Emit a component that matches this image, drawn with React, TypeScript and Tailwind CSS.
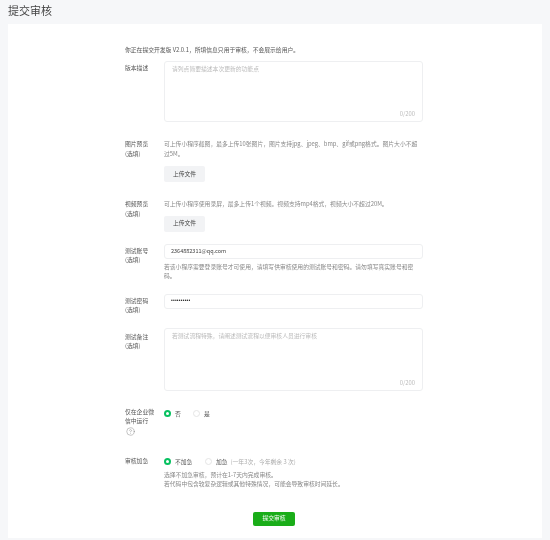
import type { ReactNode } from 'react';
import { CircleHelp } from 'lucide-react';

const font = { fontFamily: '"Noto Sans CJK SC", "Liberation Sans", sans-serif' };

function Row({ label, top, children }: { label: ReactNode; top: string; children: ReactNode }) {
  return (
    <div className={`flex ${top}`}>
      <div className="w-[39px] shrink-0 pr-[6px] text-[5.8px] leading-[9.5px] text-[#555]">{label}</div>
      <div className="min-w-0 flex-1">{children}</div>
    </div>
  );
}

function TextArea({ placeholder, height }: { placeholder: string; height: string }) {
  return (
    <div className={`flex flex-col justify-between rounded-[3px] border border-[#eeeff1] px-[7px] pt-[2px] pb-[3px] ${height}`}>
      <div className="text-[5.8px] leading-[9px] text-[#bbb]">{placeholder}</div>
      <div className="text-right text-[5.8px] leading-[9px] text-[#bbb]">0/200</div>
    </div>
  );
}

function UploadButton({ top }: { top: string }) {
  return (
    <button className={`block h-4 w-[41px] rounded-[2px] bg-[#f2f3f5] text-[5.8px] text-[#444] ${top}`}>
      上传文件
    </button>
  );
}

function Radio({ on, className = '' }: { on?: boolean; className?: string }) {
  return on ? (
    <span className={`flex h-[7px] w-[7px] items-center justify-center rounded-full bg-[#07c160] ${className}`}>
      <span className="h-[3px] w-[3px] rounded-full bg-white" />
    </span>
  ) : (
    <span className={`h-[7px] w-[7px] rounded-full border border-[#e5e5e5] ${className}`} />
  );
}

export default function App() {
  return (
    <div className="h-[540px] overflow-hidden bg-[#f6f7f9] px-2 pt-[3px] blur-[0.3px]" style={font}>
      <h1 className="text-[11px] leading-[14px] font-normal text-[#444]">提交审核</h1>
      <div className="mt-[7px] h-[514px] bg-white pt-[21px] pl-[117px]">
        <div className="w-[298px]">
          <p className="text-[5.8px] leading-[9px] text-[#555]">你正在提交开发版 V2.0.1，所填信息只用于审核，不会展示给用户。</p>

          <Row label={<div className="pt-[2px]">版本描述</div>} top="mt-[7px]">
            <TextArea height="h-[61px]" placeholder="请列点简要描述本次更新的功能点" />
          </Row>

          <Row label={<>图片预览<br />(选填)</>} top="mt-[17px]">
            <p className="text-[5.8px] leading-[9.5px] text-[#888]">
              可上传小程序截图，最多上传10张图片，图片支持jpg、jpeg、bmp、gif或png格式。图片大小不超过5M。
            </p>
            <UploadButton top="mt-2" />
          </Row>

          <Row label={<>视频预览<br />(选填)</>} top="mt-[17px]">
            <p className="text-[5.8px] leading-[9.5px] text-[#888]">
              可上传小程序使用录屏，最多上传1个视频。视频支持mp4格式，视频大小不超过20M。
            </p>
            <UploadButton top="mt-[7px]" />
          </Row>

          <Row label={<div className="pt-[2px]">测试账号<br />(选填)</div>} top="mt-3">
            <div className="flex h-[15px] items-center rounded-[3px] border border-[#eeeff1] px-[6px] text-[5.5px] text-[#444]">
              2364882311@qq.com
            </div>
            <p className="mt-[3px] text-[5.8px] leading-[9.5px] text-[#888]">
              若该小程序需要登录账号才可使用，请填写供审核使用的测试账号和密码。请勿填写真实账号和密码。
            </p>
          </Row>

          <Row label={<div className="pt-[2px]">测试密码<br />(选填)</div>} top="mt-[13px]">
            <div className="flex h-[15px] items-center rounded-[3px] border border-[#eeeff1] px-[6px] font-['Liberation_Sans'] text-[5px] tracking-[0.2px] text-[#222]">
              ••••••••••
            </div>
          </Row>

          <Row label={<div className="pt-[4px]">测试备注<br />(选填)</div>} top="mt-[13px]">
            <TextArea height="h-[63px]" placeholder="若测试流程特殊，请阐述测试流程以便审核人员进行审核" />
          </Row>

          <Row
            label={
              <>
                仅在企业微信中运行
                <CircleHelp size={9} strokeWidth={1} className="mt-[1px] ml-[1px] text-[#666]" />
              </>
            }
            top="mt-[16px]"
          >
            <div className="flex items-center pt-[2px] text-[5.8px] leading-[9px] text-[#555]">
              <Radio on />
              <span className="ml-[4px] w-[18px]">否</span>
              <Radio />
              <span className="ml-[4px]">是</span>
            </div>
          </Row>

          <Row label="审核加急" top="mt-5">
            <div className="flex items-center pt-[1px] text-[5.8px] leading-[9px] text-[#555]">
              <Radio on />
              <span className="ml-[4px] w-[30px]">不加急</span>
              <Radio />
              <span className="ml-[4px]">加急</span>
              <span className="ml-[3px] text-[#aaa]">(一年3次，今年剩余 3 次)</span>
            </div>
            <p className="mt-1 text-[5.8px] leading-[9.5px] text-[#888]">
              选择不加急审核，预计在1-7天内完成审核。
              <br />
              若代码中包含较复杂逻辑或其他特殊情况，可能会导致审核时间延长。
            </p>
          </Row>

          <div className="mt-[23px] flex justify-center">
            <button className="h-[14px] w-[42px] rounded-[2px] bg-[#1aad19] text-[5.8px] text-white">提交审核</button>
          </div>
        </div>
      </div>
    </div>
  );
}
